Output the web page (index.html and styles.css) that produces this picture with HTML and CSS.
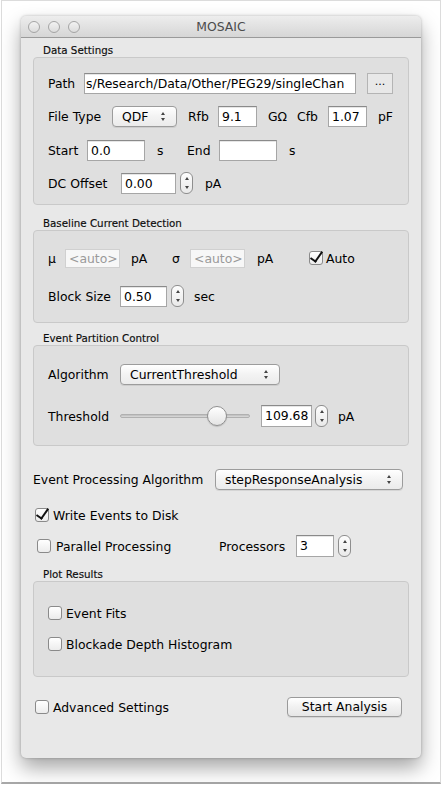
FILE: index.html
```html
<!DOCTYPE html>
<html>
<head>
<meta charset="utf-8">
<link rel="stylesheet" href="styles.css">
</head>
<body>
<div class="frame">
  <div class="window">
    <div class="titlebar">
      <div class="lights"><span class="light"></span><span class="light"></span><span class="light"></span></div>
      <div class="title">MOSAIC</div>
    </div>
    <div class="content">
      <div class="glabel">Data Settings</div>
      <div class="group g1">
        <div class="row">
          <span class="lbl w36">Path</span>
          <div class="field w272 path">s/Research/Data/Other/PEG29/singleChan</div>
          <div class="pbtn">...</div>
        </div>
        <div class="row">
          <span class="lbl w64">File Type</span>
          <div class="popup w65"><span>QDF</span><span class="arrows"></span></div>
          <span class="lbl ml11 w30">Rfb</span>
          <div class="field w39">9.1</div>
          <span class="lbl ml11 w29">GΩ</span>
          <span class="lbl w31">Cfb</span>
          <div class="field w39">1.07</div>
          <span class="lbl ml11">pF</span>
        </div>
        <div class="row">
          <span class="lbl w39">Start</span>
          <div class="field w58">0.0</div>
          <span class="lbl ml12 w30">s</span>
          <span class="lbl w32">End</span>
          <div class="field w58"></div>
          <span class="lbl ml12">s</span>
        </div>
        <div class="row">
          <span class="lbl w73">DC Offset</span>
          <div class="field w55">0.00</div>
          <div class="stepper ml4"></div>
          <span class="lbl ml12">pA</span>
        </div>
      </div>

      <div class="glabel">Baseline Current Detection</div>
      <div class="group g2">
        <div class="row">
          <span class="lbl w17">μ</span>
          <div class="field w55 dis">&lt;auto&gt;</div>
          <span class="lbl ml11 w41">pA</span>
          <span class="lbl w18">σ</span>
          <div class="field w55 dis">&lt;auto&gt;</div>
          <span class="lbl ml12 w52">pA</span>
          <span class="check on"></span>
          <span class="lbl ml3">Auto</span>
        </div>
        <div class="row">
          <span class="lbl w72">Block Size</span>
          <div class="field w47">0.50</div>
          <div class="stepper ml4"></div>
          <span class="lbl ml10">sec</span>
        </div>
      </div>

      <div class="glabel">Event Partition Control</div>
      <div class="group g3">
        <div class="row">
          <span class="lbl w72">Algorithm</span>
          <div class="popup w160"><span>CurrentThreshold</span><span class="arrows"></span></div>
        </div>
        <div class="row">
          <span class="lbl w72">Threshold</span>
          <div class="slider"><div class="track"></div><div class="knob"></div></div>
          <div class="field w51 ml11 tall">109.68</div>
          <div class="stepper ml3"></div>
          <span class="lbl ml10">pA</span>
        </div>
      </div>

      <div class="row prow">
        <span class="lbl w182">Event Processing Algorithm</span>
        <div class="popup w188"><span>stepResponseAnalysis</span><span class="arrows"></span></div>
      </div>

      <div class="row wrow">
        <span class="check on"></span>
        <span class="lbl ml4">Write Events to Disk</span>
      </div>

      <div class="row parrow">
        <span class="check"></span>
        <span class="lbl ml5 w163">Parallel Processing</span>
        <span class="lbl w77">Processors</span>
        <div class="field w38 tall">3</div>
        <div class="stepper ml4"></div>
      </div>

      <div class="glabel plabel">Plot Results</div>
      <div class="group g4">
        <div class="row">
          <span class="check"></span>
          <span class="lbl ml4">Event Fits</span>
        </div>
        <div class="row">
          <span class="check"></span>
          <span class="lbl ml4">Blockade Depth Histogram</span>
        </div>
      </div>

      <div class="row advrow">
        <span class="check"></span>
        <span class="lbl ml4 w234">Advanced Settings</span>
        <div class="btn">Start Analysis</div>
      </div>
    </div>
  </div>
</div>
</body>
</html>
```

FILE: styles.css
```css
* { box-sizing: border-box; }
html, body { margin: 0; padding: 0; background: #fff; }
body {
  font-family: "DejaVu Sans", "Lucida Grande", sans-serif;
  font-size: 12.4px;
  color: #000;
}
.frame {
  width: 440px;
  height: 784px;
  margin-left: 1px;
  border: 1px solid #dcdcdc;
  border-bottom: 2px solid #a8a8a8;
  background: #fff;
  padding: 15px 0 0 19px;
}
.window {
  width: 400px;
  height: 742px;
  background: #e8e8e8;
  border-radius: 5px;
  box-shadow: 0 10px 20px rgba(0,0,0,0.35), 0 0 3px rgba(0,0,0,0.25);
  display: flex;
  flex-direction: column;
  overflow: hidden;
}
.titlebar {
  height: 22px;
  flex: none;
  background: linear-gradient(#ededed, #d6d6d6);
  border-bottom: 1px solid #9a9a9a;
  display: flex;
  align-items: center;
  position: relative;
}
.lights { display: flex; gap: 8px; padding-left: 7px; }
.light {
  width: 12px; height: 12px; border-radius: 50%;
  border: 1px solid #a4a4a4;
  background: linear-gradient(#f2f2f2, #dcdcdc);
}
.title {
  position: absolute; left: 0; right: 0; top: 0; bottom: 0;
  display: flex; align-items: center; justify-content: center;
  font-size: 12.4px; color: #4c4c4c;
}
.content {
  padding: 5px 12px 0 12px;
  display: flex;
  flex-direction: column;
}
.glabel {
  font-size: 10.3px;
  line-height: 14px;
  height: 14px;
  padding-left: 10px;
  color: #111;
  -webkit-text-stroke: 0.15px #000;
}
.group {
  width: 376px;
  background: #dfdfdf;
  border: 1px solid #c9c9c9;
  border-radius: 4px;
  padding-left: 14px;
  display: flex;
  flex-direction: column;
}
.g1 { height: 148px; padding-top: 14px; gap: 11px; margin-bottom: 11px; }
.g1 .row:nth-child(3) { margin-top: 1px; }
.g2 { height: 93px; padding-top: 16px; gap: 16px; margin-bottom: 8px; }
.g3 { height: 101px; padding-top: 17px; gap: 20px; }
.g4 { height: 96px; padding-top: 20px; gap: 9px; }
.row { display: flex; align-items: center; height: 22px; flex: none; }
.lbl { white-space: nowrap; flex: none; }
.prow { margin-top: 23px; height: 21px; }
.wrow { margin-top: 16px; height: 18px; padding-left: 2px; }
.parrow { margin-top: 11px; padding-left: 4px; }
.plabel { margin-top: 10px; }
.advrow { margin-top: 20px; height: 20px; padding-left: 2px; }

.w17 { width: 17px; } .w18 { width: 18px; } .w29 { width: 29px; } .w30 { width: 30px; }
.w31 { width: 31px; } .w32 { width: 32px; } .w36 { width: 36px; } .w38 { width: 38px; }
.w39 { width: 39px; } .w41 { width: 41px; } .w47 { width: 47px; } .w51 { width: 51px; }
.w52 { width: 52px; } .w55 { width: 55px; } .w58 { width: 58px; } .w64 { width: 64px; }
.w65 { width: 65px; } .w72 { width: 72px; } .w73 { width: 73px; } .w77 { width: 77px; }
.w160 { width: 160px; } .w163 { width: 163px; } .w182 { width: 182px; } .w188 { width: 188px; }
.w234 { width: 234px; } .w272 { width: 272px; }
.ml3 { margin-left: 3px; } .ml4 { margin-left: 4px; } .ml5 { margin-left: 5px; }
.ml10 { margin-left: 10px; } .ml11 { margin-left: 11px; } .ml12 { margin-left: 12px; }

.field {
  height: 21px;
  flex: none;
  background: #fff;
  border: 1px solid #a6a6a6;
  border-top-color: #8a8a8a;
  box-shadow: inset 0 1px 0 #e6e6e6;
  padding: 0 3px;
  line-height: 19px;
  white-space: nowrap;
  overflow: hidden;
}
.field.tall { height: 22px; line-height: 20px; }
.field.path { padding-left: 1px; }
.field.dis {
  height: 19px;
  line-height: 17px;
  border-color: #d0d0d0;
  box-shadow: none;
  background: #f7f7f7;
  color: #9a9a9a;
}
.pbtn {
  width: 26px; height: 21px; margin-left: 11px; flex: none;
  border: 1px solid #b4b4b4;
  background: #e8e8e8;
  text-align: center;
  line-height: 16px;
  font-size: 11px;
}
.popup {
  height: 21px;
  flex: none;
  border: 1px solid #9c9c9c;
  border-radius: 4px;
  background: linear-gradient(#ffffff, #f3f3f3 50%, #ebebeb);
  box-shadow: 0 1px 0 rgba(0,0,0,0.08);
  display: flex;
  align-items: center;
  justify-content: space-between;
  padding: 0 10px 0 9px;
}
.arrows {
  width: 5px; height: 9px;
  position: relative;
}
.arrows::before, .arrows::after {
  content: "";
  position: absolute; left: 0;
  border-left: 2.5px solid transparent;
  border-right: 2.5px solid transparent;
}
.arrows::before { top: 0; border-bottom: 3px solid #444; }
.arrows::after { bottom: 0; border-top: 3px solid #444; }
.stepper {
  width: 13px; height: 22px; flex: none;
  border: 1px solid #8e8e8e;
  border-radius: 6px;
  background: linear-gradient(#fdfdfd, #e9e9e9);
  position: relative;
}
.stepper::before, .stepper::after {
  content: "";
  position: absolute; left: 3.5px;
  border-left: 2px solid transparent;
  border-right: 2px solid transparent;
}
.stepper::before { top: 4px; border-bottom: 3px solid #444; }
.stepper::after { bottom: 4px; border-top: 3px solid #444; }
.check {
  width: 14px; height: 14px; flex: none;
  border: 1px solid #8a8a8a;
  border-radius: 3px;
  background: linear-gradient(#ffffff, #ececec);
  position: relative;
}
.check.on::after {
  content: "";
  position: absolute;
  left: 3px; top: -3px;
  width: 5px; height: 11px;
  border-right: 2.5px solid #111;
  border-bottom: 2.5px solid #111;
  transform: rotate(35deg);
  transform-origin: center;
}
.slider {
  width: 130px; height: 22px; flex: none;
  position: relative;
  display: flex; align-items: center;
}
.track {
  width: 100%; height: 4px;
  border-radius: 2px;
  background: linear-gradient(#bcbcbc, #dcdcdc);
  border: 1px solid #b0b0b0;
}
.knob {
  position: absolute;
  left: 87px; top: 1px;
  width: 20px; height: 20px;
  border-radius: 50%;
  border: 1px solid #909090;
  background: linear-gradient(#ffffff, #e4e4e4);
  box-shadow: 0 1px 1px rgba(0,0,0,0.15);
}
.btn {
  width: 115px; height: 20px; flex: none;
  border: 1px solid #9a9a9a;
  border-radius: 4px;
  background: linear-gradient(#ffffff, #f1f1f1 50%, #e6e6e6);
  box-shadow: 0 1px 0 rgba(0,0,0,0.08);
  text-align: center;
  line-height: 18px;
}
```
